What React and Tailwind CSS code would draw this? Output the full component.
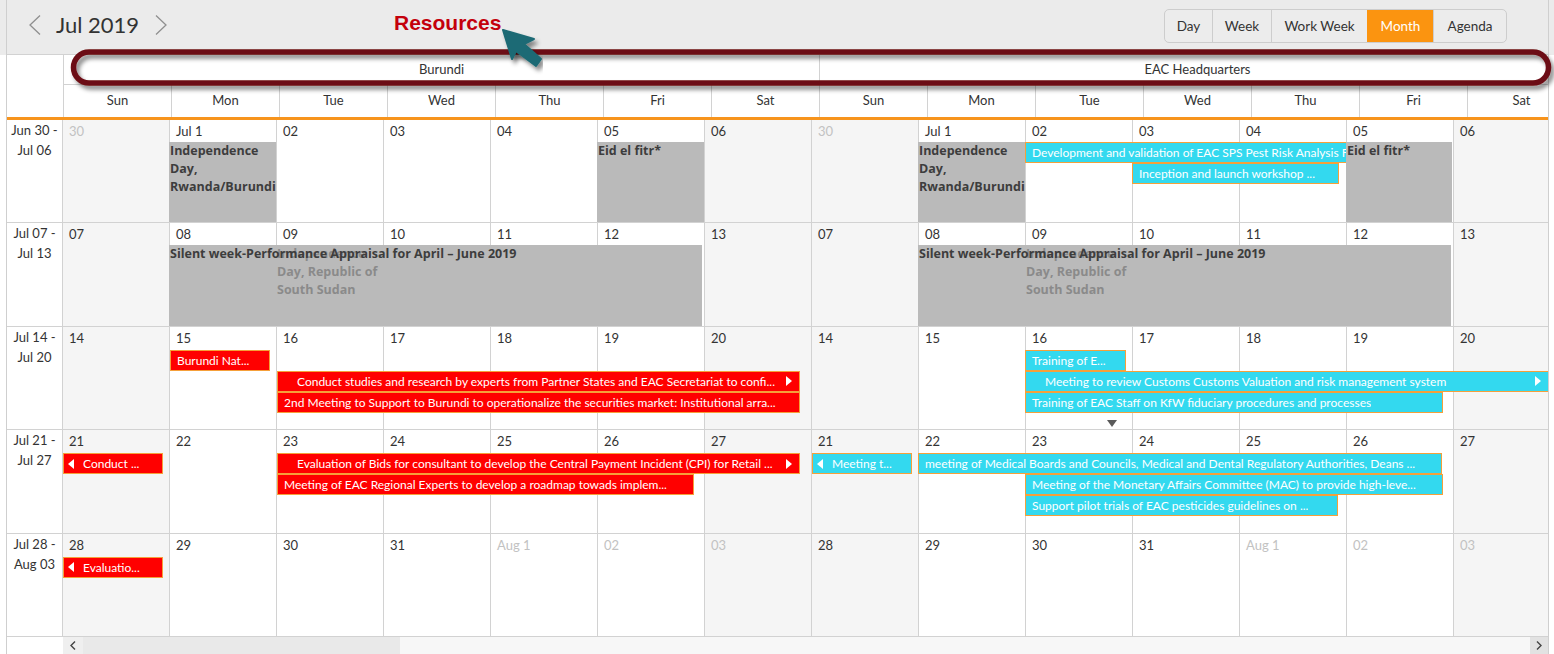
import React from 'react';

const dayNames = ['Sun', 'Mon', 'Tue', 'Wed', 'Thu', 'Fri', 'Sat'];

const weeks = [
  { label: ['Jun 30 -', 'Jul 06'], days: ['30', 'Jul 1', '02', '03', '04', '05', '06'], muted: [0] },
  { label: ['Jul 07 -', 'Jul 13'], days: ['07', '08', '09', '10', '11', '12', '13'], muted: [] },
  { label: ['Jul 14 -', 'Jul 20'], days: ['14', '15', '16', '17', '18', '19', '20'], muted: [] },
  { label: ['Jul 21 -', 'Jul 27'], days: ['21', '22', '23', '24', '25', '26', '27'], muted: [] },
  { label: ['Jul 28 -', 'Aug 03'], days: ['28', '29', '30', '31', 'Aug 1', '02', '03'], muted: [4, 5, 6] },
];

// page x coordinates, top relative to the week row
const events = [
  [
    { x1: 1025, x2: 1347, top: 22, kind: 'cyan', text: 'Development and validation of EAC SPS Pest Risk Analysis Framework' },
    { x1: 1132, x2: 1339, top: 43, kind: 'cyan', text: 'Inception and launch workshop ...' },
  ],
  [],
  [
    { x1: 170, x2: 270, top: 23, kind: 'red', text: 'Burundi Nat...' },
    { x1: 277, x2: 800, top: 44, kind: 'red', next: true, text: 'Conduct studies and research by experts from Partner States and EAC Secretariat to confi...' },
    { x1: 277, x2: 800, top: 65, kind: 'red', text: '2nd Meeting to Support to Burundi to operationalize the securities market: Institutional arra...' },
    { x1: 1025, x2: 1126, top: 23, kind: 'cyan', text: 'Training of E...' },
    { x1: 1025, x2: 1549, top: 44, kind: 'cyan', next: true, text: 'Meeting to review Customs Customs Valuation and risk management system' },
    { x1: 1025, x2: 1443, top: 65, kind: 'cyan', text: 'Training of EAC Staff on KfW fiduciary procedures and processes' },
  ],
  [
    { x1: 63, x2: 163, top: 23, kind: 'red', prev: true, text: 'Conduct ...' },
    { x1: 277, x2: 800, top: 23, kind: 'red', next: true, text: 'Evaluation of Bids for consultant to develop the Central Payment Incident (CPI) for Retail ...' },
    { x1: 277, x2: 694, top: 44, kind: 'red', text: 'Meeting of EAC Regional Experts to develop a roadmap towads implem...' },
    { x1: 812, x2: 912, top: 23, kind: 'cyan', prev: true, text: 'Meeting t...' },
    { x1: 918, x2: 1442, top: 23, kind: 'cyan', text: 'meeting of Medical Boards and Councils, Medical and Dental Regulatory Authorities, Deans ...' },
    { x1: 1025, x2: 1443, top: 44, kind: 'cyan', text: 'Meeting of the Monetary Affairs Committee (MAC) to provide high-leve...' },
    { x1: 1025, x2: 1338, top: 65, kind: 'cyan', text: 'Support pilot trials of EAC pesticides guidelines on ...' },
  ],
  [
    { x1: 63, x2: 163, top: 23, kind: 'red', prev: true, text: 'Evaluatio...' },
  ],
];

const holidays = [
  [
    { x1: 169, x2: 276, lines: ['Independence', 'Day,', 'Rwanda/Burundi'] },
    { x1: 597, x2: 704, lines: ['Eid el fitr*'] },
    { x1: 918, x2: 1025, lines: ['Independence', 'Day,', 'Rwanda/Burundi'] },
    { x1: 1346, x2: 1452, lines: ['Eid el fitr*'] },
  ],
  [
    { x1: 169, x2: 702, lines: ['Silent week-Performance Appraisal for April – June 2019'], under: 108 },
    { x1: 918, x2: 1451, lines: ['Silent week-Performance Appraisal for April – June 2019'], under: 108 },
  ],
  [], [], [],
];

const Arrow = ({ dir }) => (
  <svg width="6" height="10" viewBox="0 0 6 10" className="shrink-0">
    {dir === 'left' ? <polygon points="6,0 0,5 6,10" fill="#fff" /> : <polygon points="0,0 6,5 0,10" fill="#fff" />}
  </svg>
);

function EventBar({ e }) {
  const bg = e.kind === 'red' ? 'bg-[#ff0000]' : 'bg-[#33d9ef]';
  return (
    <div
      className={`absolute h-[21px] border border-[#f5a03a] ${bg} text-white text-[12px] leading-[19px] whitespace-nowrap overflow-hidden flex items-center`}
      style={{ left: e.x1 - 7, width: e.x2 - e.x1, top: e.top }}
    >
      {e.prev && (
        <span className="ml-[4px] mr-[9px] flex items-center"><Arrow dir="left" /></span>
      )}
      <span className={`overflow-hidden ${e.next ? 'pl-[19px] flex-1' : e.prev ? '' : 'pl-[6px]'}`}>{e.text}</span>
      {e.next && (
        <span className="ml-auto mr-[7px] pl-[6px] flex items-center"><Arrow dir="right" /></span>
      )}
    </div>
  );
}

function Holiday({ h }) {
  return (
    <div
      className="absolute top-[22px] bottom-0 bg-[#bababa] text-[12.5px] font-bold leading-[18px] whitespace-nowrap font-['Open_Sans',sans-serif]"
      style={{ left: h.x1 - 7, width: h.x2 - h.x1 }}
    >
      {h.under && (
        <div className="absolute top-0 text-[#8a8a8a]" style={{ left: h.under }}>
          <div>Independence</div>
          <div>Day, Republic of</div>
          <div>South Sudan</div>
        </div>
      )}
      <div className="relative pl-px text-[#3d3d3d]">
        {h.lines.map((l) => (
          <div key={l}>{l}</div>
        ))}
      </div>
    </div>
  );
}

function Chevron({ dir }) {
  return (
    <svg width="12" height="20" viewBox="0 0 12 20">
      <polyline
        points={dir === 'left' ? '11,0.5 1,10 11,19.5' : '1,0.5 11,10 1,19.5'}
        fill="none"
        stroke="#8f8f8f"
        strokeWidth="1.3"
      />
    </svg>
  );
}

export default function App() {
  const views = ['Day', 'Week', 'Work Week', 'Month', 'Agenda'];
  const widths = ['w-[47px]', 'w-[59px]', 'w-[96px]', 'w-[66px]', 'w-[73px]'];

  return (
    <div className="relative w-[1554px] h-[654px] overflow-hidden bg-white flex font-['Lato',sans-serif] text-[#333]">
      {/* left gutter */}
      <div className="w-[6px] shrink-0">
        <div className="h-[55px] bg-[#ebebeb]" />
      </div>

      <div className="w-[1543px] shrink-0 border-l border-r border-[#cfcfcf] flex flex-col overflow-hidden">
        {/* Toolbar */}
        <div className="h-[55px] shrink-0 bg-[#ebebeb] border-b border-[#d2d2d2] flex items-start justify-between pr-[41px]">
          <div className="flex items-center pt-[14px] pl-[22px]">
            <Chevron dir="left" />
            <span className="ml-[15px] text-[22px] leading-[22px] text-[#333]">Jul 2019</span>
            <span className="ml-[16px]"><Chevron dir="right" /></span>
          </div>
          <div className="mt-[9px] flex h-[34px] border border-[#cdcdcd] rounded-[5px] overflow-hidden bg-[#ececec]">
            {views.map((v, i) => (
              <div
                key={v}
                className={`${widths[i]} flex items-center justify-center text-[13.5px] ${i > 0 ? 'border-l border-[#cdcdcd]' : ''} ${v === 'Month' ? 'bg-[#fb9410] text-white border-[#fb9410]' : 'text-[#333]'}`}
              >
                {v}
              </div>
            ))}
          </div>
        </div>

        {/* Resource + day header */}
        <div className="flex shrink-0 h-[62px]">
          <div className="w-[56px] shrink-0" />
          <div className="flex flex-col">
            <div className="flex h-[30px] border-b border-[#d2d2d2]">
              {['Burundi', 'EAC Headquarters'].map((r) => (
                <div key={r} className="w-[756px] shrink-0 border-l border-[#d2d2d2] flex items-center justify-center text-[13px]">
                  {r}
                </div>
              ))}
            </div>
            <div className="flex h-[32px]">
              {[...dayNames, ...dayNames].map((d, i) => (
                <div key={i} className="w-[108px] shrink-0 border-l border-[#d2d2d2] flex items-center justify-center text-[13px]">
                  {d}
                </div>
              ))}
            </div>
          </div>
        </div>
        <div className="h-[3px] shrink-0 bg-[#f7941d]" />

        {/* Body */}
        {weeks.map((w, wi) => (
          <div key={wi} className="relative flex h-[103.4px] shrink-0 border-b border-[#d2d2d2]">
            <div className="w-[55px] shrink-0 text-center text-[13px] leading-[20px]">
              <div>{w.label[0]}</div>
              <div>{w.label[1]}</div>
            </div>
            {[...w.days, ...w.days].map((d, i) => {
              const col = i % 7;
              const weekend = col === 0 || col === 6;
              const muted = w.muted.includes(col);
              return (
                <div
                  key={i}
                  className={`w-[107px] shrink-0 border-l border-[#d2d2d2] px-[6px] pt-[2px] text-[13px] leading-[18px] ${weekend ? 'bg-[#f5f5f5]' : 'bg-white'} ${muted ? 'text-[#c2c2c2]' : 'text-[#333]'}`}
                >
                  {d}
                </div>
              );
            })}
            {events[wi].map((e, i) => (
              <EventBar key={i} e={e} />
            ))}
            {holidays[wi].map((h, i) => (
              <Holiday key={i} h={h} />
            ))}
            {wi === 2 && (
              <svg className="absolute left-[1100px] top-[93px]" width="10" height="7" viewBox="0 0 10 7">
                <polygon points="0,0 10,0 5,7" fill="#5a5a5a" />
              </svg>
            )}
          </div>
        ))}

        {/* Horizontal scrollbar */}
        <div className="flex h-[17px] shrink-0">
          <div className="w-[56px] shrink-0" />
          <div className="flex-1 flex bg-[#f7f7f7]">
            <div className="w-[20px] flex items-center justify-center bg-[#efefef]">
              <svg width="6" height="9" viewBox="0 0 6 9"><polyline points="5,0.5 1,4.5 5,8.5" fill="none" stroke="#444" strokeWidth="1.4" /></svg>
            </div>
            <div className="w-[317px] bg-[#e9e9e9]" />
            <div className="flex-1" />
            <div className="w-[18px] flex items-center justify-center bg-[#e2e2e2]">
              <svg width="6" height="9" viewBox="0 0 6 9"><polyline points="1,0.5 5,4.5 1,8.5" fill="none" stroke="#444" strokeWidth="1.4" /></svg>
            </div>
          </div>
        </div>
      </div>

      <div className="w-[5px] shrink-0">
        <div className="h-[55px] bg-[#ebebeb]" />
      </div>

      {/* Annotation overlay */}
      <div className="absolute left-[394px] top-[11px] text-[21px] leading-[24px] font-bold text-[#c4000b] font-['Liberation_Sans',Arial,sans-serif]">
        Resources
      </div>
      <svg className="absolute left-0 top-0 pointer-events-none" width="1554" height="654" viewBox="0 0 1554 654">
        <defs>
          <filter id="sh" x="-5%" y="-50%" width="110%" height="200%">
            <feDropShadow dx="3" dy="4" stdDeviation="2" floodColor="#000" floodOpacity="0.45" />
          </filter>
        </defs>
        <rect x="73.5" y="52" width="1475" height="31" rx="15.5" fill="none" stroke="#6c0e14" strokeWidth="5.5" filter="url(#sh)" />
        <polygon
          points="503,30 534,39 524,44 541,59 536,66 516,51 512,59"
          fill="#1c6a74"
          stroke="#1c6a74"
          strokeWidth="2"
          strokeLinejoin="round"
          filter="url(#sh)"
        />
      </svg>
    </div>
  );
}
